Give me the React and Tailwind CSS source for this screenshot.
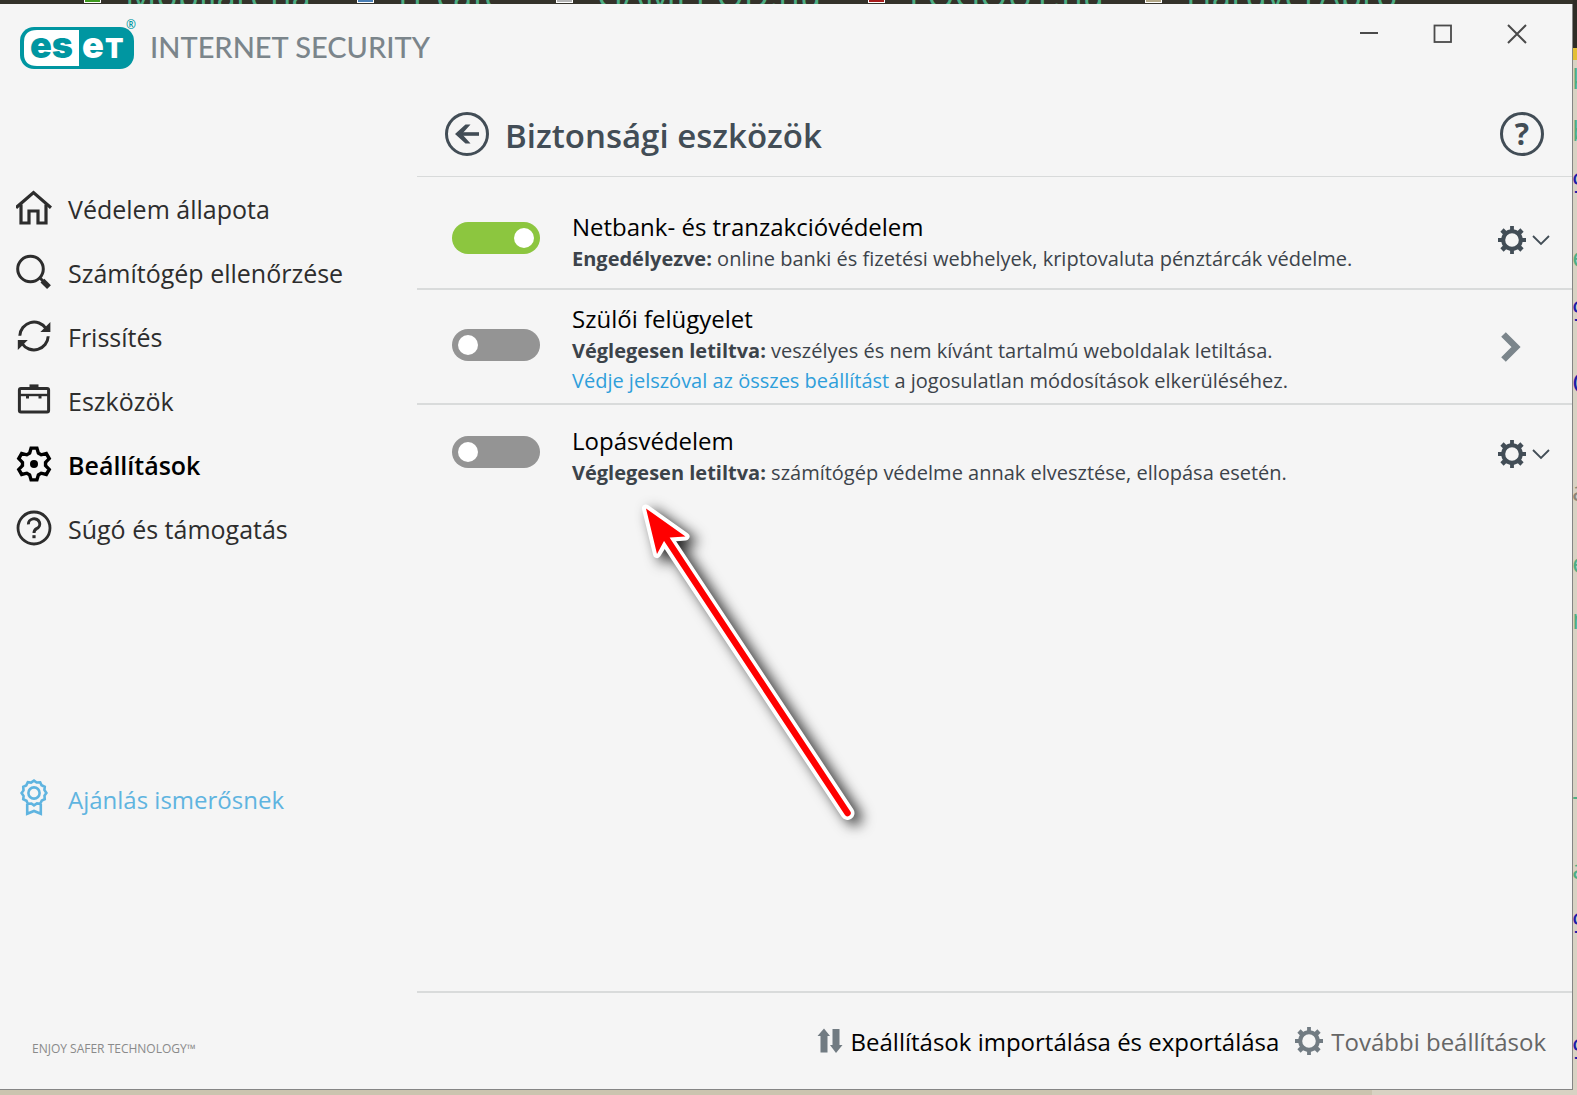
import { useState } from 'react'

const navigation = [
  { name: 'Védelem állapota', icon: HomeIcon, current: false },
  { name: 'Számítógép ellenőrzése', icon: SearchIcon, current: false },
  { name: 'Frissítés', icon: RefreshIcon, current: false },
  { name: 'Eszközök', icon: ToolsIcon, current: false },
  { name: 'Beállítások', icon: SettingsIcon, current: true },
  { name: 'Súgó és támogatás', icon: HelpIcon, current: false },
]

// page behind the window, only its edges show
const bookmarks = [
  { name: 'Mobilarena', box: 'bg-[#3f9a1f]', place: 'left-[84px]' },
  { name: 'IT café', box: 'bg-[#4a7fb5]', place: 'left-[357px]' },
  { name: 'GAMEPOD.hu', box: 'bg-[#b5b5b5]', place: 'left-[556px]' },
  { name: 'LOGOUT.hu', box: 'bg-[#a81c1c]', place: 'left-[868px]' },
  { name: 'HardverApró', box: 'bg-[#b3a888]', place: 'left-[1145px]' },
]

const edgeLetters = [
  { letter: 'k', place: 'top-[62px] text-[#4dae84]' },
  { letter: 'b', place: 'top-[114px] text-[#4dae84]' },
  { letter: '9', place: 'top-[166px] text-[#1c1ca8]' },
  { letter: 'e', place: 'top-[240px] text-[#4dae84]' },
  { letter: '9', place: 'top-[294px] text-[#1c1ca8]' },
  { letter: 'O', place: 'top-[366px] text-[#1c1ca8]' },
  { letter: 'a', place: 'top-[474px] text-[#8b8577]' },
  { letter: 'e', place: 'top-[546px] text-[#4dae84]' },
  { letter: 'n', place: 'top-[602px] text-[#4dae84]' },
  { letter: '–', place: 'top-[778px] text-[#4dae84]' },
  { letter: 'a', place: 'top-[852px] text-[#4dae84]' },
  { letter: '9', place: 'top-[906px] text-[#1c1ca8]' },
  { letter: '9', place: 'top-[1032px] text-[#1c1ca8]' },
]

// repeats one tooth (points with the centre at 0,0) around the circle
function cog(tooth, count) {
  const points = []
  for (let i = 0; i < count; i++) {
    const a = (i * 2 * Math.PI) / count
    tooth.forEach(([x, y]) => {
      const px = x * Math.cos(a) - y * Math.sin(a)
      const py = x * Math.sin(a) + y * Math.cos(a)
      points.push(px.toFixed(2) + ',' + py.toFixed(2))
    })
  }
  return points.join(' ')
}

function HomeIcon() {
  return (
    <svg viewBox="0 0 36 36" className="size-9" fill="none" stroke="currentColor" strokeWidth="3.2" aria-hidden="true">
      <path d="M0 17.700 L17.500 2.600 L35 17.700" />
      <path d="M5 14.500 V33 H13 V21 H22 V33 H30 V14.500" />
    </svg>
  )
}

function SearchIcon() {
  return (
    <svg viewBox="0 0 36 36" className="size-9" fill="none" stroke="currentColor" aria-hidden="true">
      <circle cx="14.5" cy="15" r="12.8" strokeWidth="3" />
      <path d="M24 24 L28 28" strokeWidth="3" />
      <path d="M26.4 26.600 L33 33.200" strokeWidth="5.4" />
    </svg>
  )
}

function RefreshIcon() {
  return (
    <svg viewBox="0 0 36 36" className="size-9" fill="none" stroke="currentColor" strokeWidth="3" aria-hidden="true">
      <path d="M3.800 17.800 A14.300 14.300 0 0 1 30 10.500" />
      <path d="M32.200 18.200 A14.300 14.300 0 0 1 6 25.500" />
      <path d="M34.400 4 V14 H24.400 Z" fill="currentColor" stroke="none" />
      <path d="M1.800 32 V22 H11.800 Z" fill="currentColor" stroke="none" />
    </svg>
  )
}

function ToolsIcon() {
  return (
    <svg viewBox="0 0 36 36" className="size-9" fill="none" stroke="currentColor" strokeWidth="3" aria-hidden="true">
      <rect x="3.4" y="6.4" width="29.2" height="23.6" rx="1.5" />
      <path d="M3 13 H33" strokeWidth="2.4" />
      <path d="M13.500 4.400 H22.500" strokeWidth="4" />
      <path d="M11.500 13 V16.500 M24 13 V16.500" strokeWidth="3" />
    </svg>
  )
}

function SettingsIcon() {
  const tooth = [[-4.4, -10.8], [-2.9, -15.9], [2.9, -15.9], [4.4, -10.8]]
  return (
    <svg viewBox="-18 -18 36 36" className="size-9" fill="none" stroke="currentColor" strokeWidth="3.4" aria-hidden="true">
      <polygon points={cog(tooth, 6)} />
      <circle r="4" fill="currentColor" stroke="none" />
    </svg>
  )
}

function HelpIcon() {
  return (
    <svg viewBox="-18 -18 36 36" className="size-9" fill="none" stroke="currentColor" strokeWidth="2.8" aria-hidden="true">
      <circle r="16" />
      <path d="M-5.600 -3.600 A5.700 5.200 0 1 1 2.600 0.600 C0.800 1.700 0 2.600 0 5" strokeWidth="3" />
      <path d="M-1.600 7.200 H1.600 V10.200 H-1.600 Z" fill="currentColor" stroke="none" />
    </svg>
  )
}

function BadgeIcon() {
  return (
    <svg viewBox="-18 -14 36 38" className="w-9" fill="none" stroke="currentColor" strokeWidth="2.6" aria-hidden="true">
      <path d="M-6.800 11 V20.800 L0 18 L6.800 20.800 V11" />
      <polygon points={cog([[-3, -10.4], [0, -12.4]], 12)} fill="#f5f5f5" />
      <circle r="5.600" />
    </svg>
  )
}

function GearIcon() {
  return (
    <svg viewBox="-14 -14 28 28" className="size-7" fill="none" stroke="currentColor" aria-hidden="true">
      <circle r="8.800" strokeWidth="4" />
      <path d="M0 -14 V-9 M0 14 V9 M-14 0 H-9 M14 0 H9" strokeWidth="3.800" />
      <path d="M-10 -10 L-7 -7 M10 10 L7 7 M10 -10 L7 -7 M-10 10 L-7 7" strokeWidth="4.600" />
    </svg>
  )
}

function Logo() {
  return (
    <svg viewBox="0 0 118 52" className="h-[52px] w-[118px]" role="img" aria-label="eset">
      <rect x="0" y="9" width="114" height="42" rx="14" fill="#0096a1" />
      <path d="M59 12 V48 H17 Q4 48 4 36 V24 Q4 12 17 12 Z" fill="#fff" />
      <text x="10" y="40" className="font-[Inter,sans-serif] text-[36px] font-black" fill="#0096a1">es</text>
      <text x="62" y="40" className="font-[Inter,sans-serif] text-[36px] font-black" fill="#fff">e</text>
      <text x="85" y="40" className="font-[Inter,sans-serif] text-[27px] font-black" fill="#fff">T</text>
      <text x="106" y="11" className="font-['Open_Sans',sans-serif] text-[12px] font-semibold" fill="#0096a1">®</text>
    </svg>
  )
}

function Toggle({ label, on }) {
  const [checked, setChecked] = useState(on)
  return (
    <input
      type="checkbox"
      role="switch"
      aria-label={label}
      checked={checked}
      onChange={() => setChecked(!checked)}
      className="mb-2 flex h-8 w-[88px] shrink-0 appearance-none items-center rounded-full bg-[#949494] px-1.5 before:size-5 before:rounded-full before:bg-white checked:bg-[#8cc63f] checked:before:translate-x-14"
    />
  )
}

function SettingsMenu({ label }) {
  return (
    <button type="button" aria-label={label} className="flex items-center gap-1.5 text-[#424d56]">
      <GearIcon />
      <svg viewBox="0 0 18 12" className="w-[18px]" fill="none" stroke="currentColor" strokeWidth="1.800" aria-hidden="true">
        <path d="M1 2 L9 10 L17 2" />
      </svg>
    </button>
  )
}

function Row({ title, on, status, children, action, className }) {
  return (
    <li className={className}>
      <div className="flex items-center pr-[22px] pl-[35px]">
        <Toggle label={title} on={on} />
        <div className="ml-8 flex-1">
          <h2 className="text-2xl leading-[35px] text-black">{title}</h2>
          <p className="text-xl leading-[30px] text-[#3c434a]">
            <strong className="font-bold">{status}</strong> {children}
          </p>
        </div>
        <div className="mb-1 flex">{action}</div>
      </div>
    </li>
  )
}

export default function App() {
  return (
    <div className="relative flex min-h-screen flex-col overflow-hidden bg-[#d8d2c3] font-['Open_Sans','Noto_Sans',sans-serif]">
      <div className="relative h-1 overflow-hidden bg-[#34322a]" aria-hidden="true">
        {bookmarks.map((item) => (
          <div key={item.name} className={'absolute bottom-0 flex items-end gap-6 ' + item.place}>
            <span className={'mb-px h-4 w-[17px] border border-white ' + item.box}></span>
            <span className="-mb-2 text-[35px] leading-none whitespace-nowrap text-[#4dae84]">{item.name}</span>
          </div>
        ))}
      </div>

      <div className="flex flex-1">
        <div className="flex flex-1 flex-col border-r border-b border-[#858585] bg-[#f5f5f5]">
          <header className="flex h-[88px] items-start justify-between">
            <div className="flex items-center gap-3 pt-3.5 pl-5">
              <Logo />
              <span className="pt-1.5 font-[Lato,sans-serif] text-[29px] leading-10 font-medium text-[#7b858b]">INTERNET SECURITY</span>
            </div>
            <div className="flex pr-[18px] text-[#4a4a4a]">
              <button type="button" aria-label="Kis méret" className="flex h-15 w-[74px] items-center justify-center">
                <svg viewBox="0 0 20 20" className="size-5" stroke="currentColor" strokeWidth="2"><path d="M1 9 H19" /></svg>
              </button>
              <button type="button" aria-label="Teljes méret" className="flex h-15 w-[74px] items-center justify-center">
                <svg viewBox="0 0 20 20" className="size-5" fill="none" stroke="currentColor" strokeWidth="1.800"><rect x="1.500" y="1.500" width="16.500" height="16.500" /></svg>
              </button>
              <button type="button" aria-label="Bezárás" className="flex h-15 w-[74px] items-center justify-center">
                <svg viewBox="0 0 20 20" className="size-5" stroke="currentColor" strokeWidth="2"><path d="M1 1 L19 19 M19 1 L1 19" /></svg>
              </button>
            </div>
          </header>

          <div className="flex flex-1">
            <aside className="flex w-[417px] shrink-0 flex-col pt-21 pb-7">
              <nav>
                {navigation.map((item) => (
                  <a
                    key={item.name}
                    href="#"
                    aria-current={item.current ? 'page' : undefined}
                    className={
                      'flex h-16 items-center gap-4 pl-4 text-[25px] ' +
                      (item.current ? 'font-semibold text-black' : 'text-[#2d2d2d]')
                    }
                  >
                    <item.icon />
                    <span className="pt-1">{item.name}</span>
                  </a>
                ))}
              </nav>
              <a href="#" className="mt-auto mb-[207px] flex h-16 items-center gap-4 pl-4 text-2xl text-[#5fb4e0]">
                <BadgeIcon />
                <span className="pt-1">Ajánlás ismerősnek</span>
              </a>
              <p className="pl-8 text-xs leading-6 text-[#8a8a8a]">ENJOY SAFER TECHNOLOGY™</p>
            </aside>

            <main className="flex flex-1 flex-col">
              <div className="flex h-[85px] items-center border-b border-[#d8dada] pr-7 pl-7 text-[#424d56]">
                <button type="button" aria-label="Vissza">
                  <svg viewBox="-22 -22 44 44" className="size-11" fill="none" stroke="currentColor" aria-hidden="true">
                    <circle r="20.500" strokeWidth="3" />
                    <path d="M12 0 H-9" strokeWidth="3.600" />
                    <path d="M-1.500 -9.500 H3.500 L-5 0 L3.500 9.500 H-1.500 L-12 0 Z" fill="currentColor" stroke="none" />
                  </svg>
                </button>
                <h1 className="ml-4 flex-1 pt-1 text-[33px] leading-10 font-semibold">Biztonsági eszközök</h1>
                <button type="button" aria-label="Súgó" className="flex size-11 items-center justify-center rounded-full border-3 border-current text-3xl leading-none font-bold">?</button>
              </div>

              <div className="relative flex-1">
                <ul>
                  <Row
                    className="border-b-2 border-[#d9dbdb] pt-8 pb-3.5"
                    title="Netbank- és tranzakcióvédelem"
                    status="Engedélyezve:"
                    on={true}
                    action={<SettingsMenu label="Netbank- és tranzakcióvédelem beállításai" />}
                  >
                    online banki és fizetési webhelyek, kriptovaluta pénztárcák védelme.
                  </Row>
                  <Row
                    className="border-b-2 border-[#d9dbdb] pt-[11px] pb-[7px]"
                    title="Szülői felügyelet"
                    status="Véglegesen letiltva:"
                    on={false}
                    action={
                      <button type="button" aria-label="Szülői felügyelet megnyitása" className="mr-7 text-[#7b858b]">
                        <svg viewBox="0 0 22 30" className="w-[22px]" fill="none" stroke="currentColor" strokeWidth="6.500" aria-hidden="true">
                          <path d="M3.500 2.500 L16 15 L3.500 27.500" />
                        </svg>
                      </button>
                    }
                  >
                    veszélyes és nem kívánt tartalmú weboldalak letiltása.
                    <br />
                    <a href="#" className="text-[#2f9fdb]">Védje jelszóval az összes beállítást</a> a jogosulatlan módosítások elkerüléséhez.
                  </Row>
                  <Row
                    className="pt-[18px]"
                    title="Lopásvédelem"
                    status="Véglegesen letiltva:"
                    on={false}
                    action={<SettingsMenu label="Lopásvédelem beállításai" />}
                  >
                    számítógép védelme annak elvesztése, ellopása esetén.
                  </Row>
                </ul>

                {/* arrow pointing at the last row */}
                <svg
                  viewBox="0 0 260 350"
                  className="pointer-events-none absolute top-[313px] left-[203px] h-[350px] w-[260px] overflow-visible drop-shadow-[7px_5px_7px_rgba(0,0,0,0.85)]"
                  strokeLinecap="round"
                  strokeLinejoin="round"
                  aria-hidden="true"
                >
                  <path d="M26 18.500 L65.500 46.500 L47 48 L37 64 Z" fill="#fff" stroke="#fff" strokeWidth="8" />
                  <path d="M47 50 L227.500 323" stroke="#fff" strokeWidth="14" />
                  <path d="M26 18.500 L65.500 46.500 L50 47.500 L44 51 L37 64 Z" fill="#f00" />
                  <path d="M46 48 L227.500 323" stroke="#f00" strokeWidth="6.500" />
                </svg>
              </div>

              <footer className="flex h-[98px] items-center justify-end gap-4 border-t-2 border-[#d9dbdb] pr-[26px] text-2xl">
                <button type="button" className="flex items-center gap-2 text-black">
                  <svg viewBox="0 0 26 26" className="size-[26px] text-[#717b82]" fill="currentColor" aria-hidden="true">
                    <path d="M7 0.500 L13 8 H10.500 V24.500 H3.500 V8 H0.500 Z" />
                    <path d="M19 25 L13 17 H15.500 V1 H22.500 V17 H25.500 Z" />
                  </svg>
                  <span className="pt-0.5">Beállítások importálása és exportálása</span>
                </button>
                <button type="button" className="flex items-center gap-2 text-[#666]">
                  <span className="text-[#717b82]"><GearIcon /></span>
                  <span className="pt-0.5">További beállítások</span>
                </button>
              </footer>
            </main>
          </div>
        </div>
        <div className="w-1"></div>
      </div>
      <div className="h-[5px] w-[87%] bg-[#cbc4af]"></div>

      <div className="absolute top-0 right-0 h-full w-1 overflow-hidden text-[28px] leading-8" aria-hidden="true">
        <div className="h-12 bg-[#2e2c26]"></div>
        <div className="h-3 bg-[#e3bf35]"></div>
        {edgeLetters.map((item, i) => (
          <span key={i} className={'absolute -left-px ' + item.place}>{item.letter}</span>
        ))}
      </div>
    </div>
  )
}
